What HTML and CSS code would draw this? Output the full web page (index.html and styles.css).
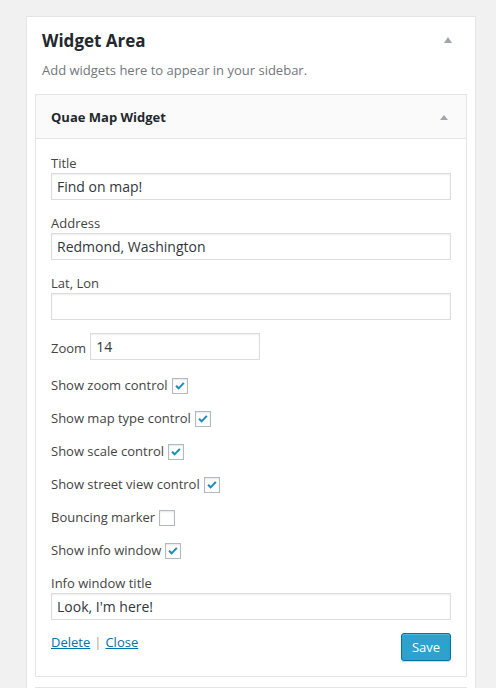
FILE: index.html
```html
<!DOCTYPE html>
<html>
<head>
<meta charset="utf-8">
<link rel="stylesheet" href="styles.css">
</head>
<body>
<div class="sidebar">
  <div class="sidebar-head">
    <h2 class="sidebar-title">Widget Area</h2>
    <span class="tri tri-lg"></span>
  </div>
  <p class="sidebar-desc">Add widgets here to appear in your sidebar.</p>
  <div class="widget">
    <div class="widget-head">
      <h3 class="widget-title">Quae Map Widget</h3>
      <span class="tri tri-sm"></span>
    </div>
    <div class="widget-inside">
      <label class="lbl">Title</label>
      <div class="inp">Find on map!</div>
      <label class="lbl">Address</label>
      <div class="inp">Redmond, Washington</div>
      <label class="lbl">Lat, Lon</label>
      <div class="inp"></div>
      <div class="zoom-row">
        <span class="zlbl">Zoom</span>
        <div class="inp inp-zoom">14</div>
      </div>
      <div class="chk-row"><span>Show zoom control</span><span class="cb on"><svg viewBox="0 0 16 16"><path d="M3.5 7.8 L6.4 10.7 L12.4 4.4"/></svg></span></div>
      <div class="chk-row"><span>Show map type control</span><span class="cb on"><svg viewBox="0 0 16 16"><path d="M3.5 7.8 L6.4 10.7 L12.4 4.4"/></svg></span></div>
      <div class="chk-row"><span>Show scale control</span><span class="cb on"><svg viewBox="0 0 16 16"><path d="M3.5 7.8 L6.4 10.7 L12.4 4.4"/></svg></span></div>
      <div class="chk-row"><span>Show street view control</span><span class="cb on"><svg viewBox="0 0 16 16"><path d="M3.5 7.8 L6.4 10.7 L12.4 4.4"/></svg></span></div>
      <div class="chk-row"><span>Bouncing marker</span><span class="cb"></span></div>
      <div class="chk-row"><span>Show info window</span><span class="cb on"><svg viewBox="0 0 16 16"><path d="M3.5 7.8 L6.4 10.7 L12.4 4.4"/></svg></span></div>
      <label class="lbl lbl-info">Info window title</label>
      <div class="inp">Look, I'm here!</div>
      <div class="actions">
        <div class="links"><a href="#">Delete</a><span class="sep">|</span><a href="#">Close</a></div>
        <button class="save">Save</button>
      </div>
    </div>
  </div>
  <div class="widget-next"></div>
</div>
</body>
</html>
```

FILE: styles.css
```css
html, body {
  margin: 0;
  padding: 0;
  background: #f1f1f1;
  font-family: "Open Sans", "Liberation Sans", sans-serif;
  color: #444;
}
body {
  height: 688px;
  overflow: hidden;
}
.sidebar {
  margin: 16px 0 0 26px;
  width: 450px;
  height: 700px;
  background: #fff;
  border: 1px solid #e5e5e5;
  border-bottom: 0;
  padding: 0 8px;
  box-sizing: border-box;
}
.sidebar-head {
  display: flex;
  align-items: center;
  justify-content: space-between;
  padding: 12px 15px 0 7px;
}
.sidebar-title {
  margin: 0;
  font-size: 17px;
  line-height: 24px;
  font-weight: 700;
  color: #23282d;
}
.sidebar-desc {
  margin: 7px 0 0 7px;
  font-size: 13px;
  line-height: 20px;
  color: #72777c;
}
.tri {
  display: block;
  width: 0;
  height: 0;
  border-left: 4px solid transparent;
  border-right: 4px solid transparent;
  border-bottom: 6px solid #a0a5aa;
}
.tri-lg {
  margin-top: -2px;
}
.tri-sm {
  border-bottom-width: 5px;
  margin-top: 2px;
}
.widget {
  margin-top: 14px;
  border: 1px solid #e5e5e5;
  background: #fff;
}
.widget-head {
  display: flex;
  align-items: center;
  justify-content: space-between;
  height: 43px;
  padding: 0 18px 0 15px;
  background: #fafafa;
  border-bottom: 1px solid #e5e5e5;
}
.widget-title {
  margin: 0;
  font-size: 13px;
  line-height: 20px;
  font-weight: 700;
  color: #23282d;
}
.widget-inside {
  padding: 14px 15px 15px;
}
.lbl {
  display: block;
  font-size: 13px;
  line-height: 20px;
  color: #444;
}
.inp {
  box-sizing: border-box;
  height: 27px;
  width: 400px;
  border: 1px solid #ddd;
  box-shadow: inset 0 1px 2px rgba(0,0,0,.07);
  padding: 0 5px;
  font-size: 14px;
  line-height: 25px;
  color: #32373c;
  margin-bottom: 13px;
}
.zoom-row {
  display: flex;
  align-items: center;
  gap: 4px;
  margin-top: 1px;
}
.zlbl {
  font-size: 13px;
  line-height: 20px;
  margin-top: 2px;
}
.inp-zoom {
  width: 170px;
  margin-bottom: 0;
}
.chk-row {
  display: flex;
  align-items: center;
  gap: 4px;
  height: 20px;
  margin-top: 13px;
  font-size: 13px;
  line-height: 20px;
}
.zoom-row + .chk-row {
  margin-top: 15px;
}
.cb {
  box-sizing: border-box;
  width: 16px;
  height: 16px;
  border: 1px solid #b4b9be;
  box-shadow: inset 0 1px 2px rgba(0,0,0,.1);
  background: #fff;
  margin-top: 2px;
  display: flex;
}
.cb svg {
  width: 14px;
  height: 14px;
  fill: none;
  stroke: #1e8cbe;
  stroke-width: 2.4;
}
.lbl-info {
  margin-top: 13px;
}
.actions {
  display: flex;
  justify-content: space-between;
  align-items: flex-start;
  margin-top: 1px;
}
.links {
  font-size: 13px;
  line-height: 18px;
}
.links a {
  color: #0073aa;
  text-decoration: underline;
}
.sep {
  color: #a0a5aa;
  margin: 0 4px;
}
.save {
  box-sizing: border-box;
  width: 50px;
  height: 28px;
  padding: 0;
  background: #2ea2cc;
  border: 1px solid #0074a2;
  border-radius: 3px;
  color: #fff;
  font-family: "Open Sans", "Liberation Sans", sans-serif;
  font-size: 13px;
  line-height: 26px;
  box-shadow: inset 0 1px 0 rgba(120,200,230,.5), 0 1px 0 rgba(0,0,0,.15);
}
.widget-next {
  margin-top: 10px;
  height: 20px;
  border: 1px solid #e5e5e5;
  background: #fafafa;
}
```
